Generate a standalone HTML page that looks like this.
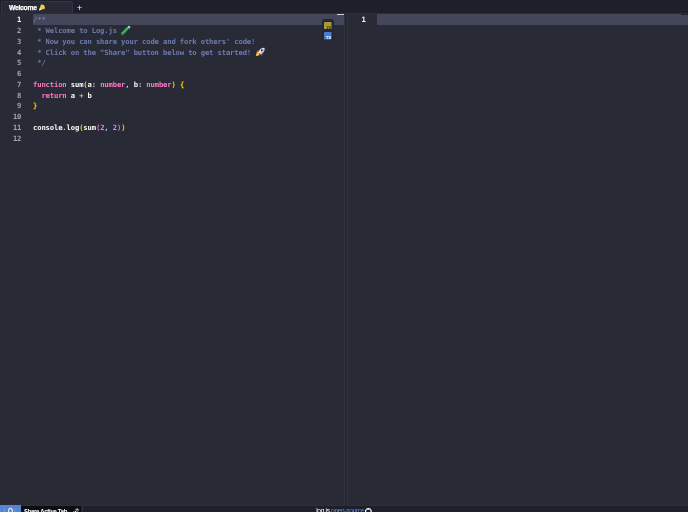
<!DOCTYPE html>
<html lang="en">
<head>
<meta charset="utf-8">
<title>Log.js</title>
<style>
*{box-sizing:border-box;margin:0;padding:0}
html,body{width:688px;height:512px;overflow:hidden;background:#282a36}
body{position:relative;font-family:"Liberation Sans",sans-serif;color:#f8f8f2}
.abs{position:absolute}
#root{left:0;top:0;width:688px;height:512px;overflow:hidden;will-change:transform}
#tabbar{left:0;top:0;width:688px;height:13.8px;background:#1d1f2a}
#tabline{left:0;top:12.6px;width:688px;height:1.2px;background:#2b2d3a}
#tab{left:1px;top:1.1px;width:72px;height:11.6px;background:#272935;border:0.6px solid #333547;border-bottom:none;border-radius:2.5px 2.5px 0 0}
#tabtxt{left:8.9px;top:3.1px;-webkit-text-stroke:0.25px #fff;font-size:6.8px;line-height:10px;font-weight:bold;letter-spacing:-0.28px;color:#fff;white-space:nowrap}
#plus{left:74.6px;top:1.7px;width:10px;height:12px;font-size:9.5px;line-height:12px;text-align:center;color:#f4f4f8}
#hl1{left:33px;top:13.8px;width:311px;height:11.1px;background:#44475a}
#hl2{left:377.2px;top:13.8px;width:311px;height:11.3px;background:#44475a}
.mono{font-family:"DejaVu Sans Mono","Liberation Mono",monospace;font-size:7.2px;letter-spacing:-0.134px;font-weight:bold;white-space:pre}
.ln{left:0;width:21.3px;text-align:right;color:#9fa1ad;height:10.75px;line-height:10.75px}
.ln.act{color:#f8f8f2}
.cl{left:33px;height:10.75px;line-height:10.75px;color:#f8f8f2}
.c{color:#6c7cb0}.k{color:#ff79c6}.y{color:#ffd700}.o{color:#da70d6}.n{color:#bd93f9}.p{color:#c9cad6}
#div1{left:343.6px;top:13.8px;width:1.4px;height:491.1px;background:#2f3140}
#div2{left:345px;top:13.8px;width:2.4px;height:491.1px;background:#262833}
#icons{left:322px;top:18.7px;width:11.6px;height:22.8px;background:#262733;border-radius:2.5px}
#footer{left:0;top:504.9px;width:688px;height:8px;background:#1d1f2a;border-top:0.9px solid #2d2f3c}
#fblue{left:0;top:505.3px;width:20.7px;height:7px;background:#5684d7}
#fblack{left:20.7px;top:505.8px;width:60.5px;height:7px;background:#0d0e13}
.ft{font-size:6.6px;line-height:8px;white-space:nowrap;color:#fff}
</style>
</head>
<body>
<div id="root" class="abs">
<div id="tabbar" class="abs"></div>
<div id="tabline" class="abs"></div>
<div id="tab" class="abs"></div>
<div id="tabtxt" class="abs">Welcome</div>
<svg class="abs" role="img" aria-label="party popper" style="left:38.2px;top:3.2px" width="7.2" height="8.4" viewBox="38 3 8 9">
  <path d="M39.1 11.1 L41.1 5 C43.4 4.6 45.2 6.6 45.3 9.2 Z" fill="#e9bf55"/>
  <path d="M39.1 11.1 L40.2 7.8 L42.6 10.2 Z" fill="#efe2c4"/>
  <path d="M41.1 5 C42.6 3.9 44.6 4.6 45.3 6.6 C45.8 8 45.7 9 45.3 9.3 C43.4 8.8 41.6 7 41.1 5 Z" fill="#f2d638"/>
  <circle cx="41.9" cy="4" r="0.5" fill="#8a6a2a"/><circle cx="45.3" cy="10.4" r="0.45" fill="#a8782a"/>
</svg>
<div id="plus" class="abs">+</div>

<div id="hl1" class="abs"></div>
<div id="hl2" class="abs"></div>
<div id="div1" class="abs"></div>
<div id="div2" class="abs"></div>
<div class="abs" style="left:347.4px;top:13.8px;width:0.7px;height:491.1px;background:#2e303d"></div>

<div class="abs mono ln act" style="top:15.40px">1</div>
<div class="abs mono ln" style="top:26.15px">2</div>
<div class="abs mono ln" style="top:36.90px">3</div>
<div class="abs mono ln" style="top:47.65px">4</div>
<div class="abs mono ln" style="top:58.40px">5</div>
<div class="abs mono ln" style="top:69.15px">6</div>
<div class="abs mono ln" style="top:79.90px">7</div>
<div class="abs mono ln" style="top:90.65px">8</div>
<div class="abs mono ln" style="top:101.40px">9</div>
<div class="abs mono ln" style="top:112.15px">10</div>
<div class="abs mono ln" style="top:122.90px">11</div>
<div class="abs mono ln" style="top:133.65px">12</div>
<div class="abs mono cl" style="top:15.40px"><span class="c">/**</span></div>
<div class="abs mono cl" style="top:26.15px"><span class="c"> * Welcome to Log.js </span></div>
<div class="abs mono cl" style="top:36.90px"><span class="c"> * Now you can share your code and fork others' code!</span></div>
<div class="abs mono cl" style="top:47.65px"><span class="c"> * Click on the "Share" button below to get started! </span></div>
<div class="abs mono cl" style="top:58.40px"><span class="c"> */</span></div>
<div class="abs mono cl" style="top:79.90px"><span class="k">function</span> sum<span class="y">(</span>a<span class="p">:</span> <span class="k">number</span><span class="p">,</span> b<span class="p">:</span> <span class="k">number</span><span class="y">)</span> <span class="y">{</span></div>
<div class="abs mono cl" style="top:90.65px">  <span class="k">return</span> a <span class="k">+</span> b</div>
<div class="abs mono cl" style="top:101.40px"><span class="y">}</span></div>
<div class="abs mono cl" style="top:122.90px">console<span class="p">.</span>log<span class="y">(</span>sum<span class="o">(</span><span class="n">2</span><span class="p">,</span> <span class="n">2</span><span class="o">)</span><span class="y">)</span></div>

<div id="icons" class="abs"></div>
<!-- crayon emoji on line 2 -->
<svg class="abs" role="img" aria-label="crayon" style="left:119px;top:24px" width="13" height="13" viewBox="0 0 13 13">
  <g transform="rotate(-45 6.6 6.5)">
    <rect x="0.9" y="5.3" width="11.6" height="2.5" rx="0.8" fill="#33a350"/>
    <rect x="0.9" y="5.3" width="9.4" height="0.9" rx="0.4" fill="#5cc474"/>
    <rect x="10.6" y="5.3" width="1.9" height="2.5" rx="0.7" fill="#c6cad2"/>
    <rect x="0.9" y="5.5" width="1.3" height="2.1" rx="0.5" fill="#237d3c"/>
  </g>
</svg>
<!-- rocket emoji on line 4 -->
<svg class="abs" role="img" aria-label="rocket" style="left:254.6px;top:47.1px" width="10" height="10" viewBox="0 0 11 11">
  <path d="M1.2 10 C1 7.6 1.8 5.6 3.6 4.6 L5.2 7.6 C4.4 9.2 2.8 10 1.2 10 Z" fill="#f4c531"/>
  <path d="M1.6 5.4 C2.2 4 3.2 3.6 4.4 3.8 L4.6 5.6 C3.4 5.4 2.4 5.6 1.6 6.6 Z" fill="#c2521f"/>
  <path d="M4.6 7 L7.4 9.6 C8.2 8.6 8.4 7.4 8 6.2 Z" fill="#c8452f"/>
  <path d="M10.4 0.8 C8 0.6 5.6 1.8 4.2 4.4 L3.8 6 L6 8 L7.4 7.4 C9.8 5.8 10.8 3.2 10.4 0.8 Z" fill="#dcdcec"/>
  <path d="M10.4 0.8 C10.8 3.2 9.8 5.8 7.4 7.4 L6 8 L5.2 7.2 C8 5.6 9.6 3.4 10.4 0.8 Z" fill="#b4b2cc"/>
  <circle cx="7.5" cy="3.5" r="1.05" fill="#2a1e30"/>
</svg>
<!-- language icons -->
<svg class="abs" style="left:324.3px;top:21.8px" width="7.5" height="7.3" viewBox="0 0 7.5 7.3">
  <rect width="7.5" height="7.3" rx="0.5" fill="#a9993b"/>
  <text x="7" y="6.7" text-anchor="end" font-family="Liberation Sans, sans-serif" font-weight="bold" font-size="3.9" fill="#2e2a1c">JS</text>
</svg>
<svg class="abs" style="left:324.3px;top:32.4px" width="7.5" height="7.4" viewBox="0 0 7.5 7.4">
  <rect width="7.5" height="7.4" rx="0.8" fill="#4a7ed2"/>
  <text x="7" y="6.7" text-anchor="end" font-family="Liberation Sans, sans-serif" font-weight="bold" font-size="3.9" fill="#ffffff">TS</text>
</svg>
<div class="abs" style="left:337.4px;top:14.1px;width:6.4px;height:1.3px;background:#cdced6"></div>
<!-- console panel -->
<div class="abs mono" style="left:347px;width:18.6px;text-align:right;top:15.40px;height:10.75px;line-height:10.75px;color:#f8f8f2">1</div>

<div id="footer" class="abs"></div>
<div id="fblue" class="abs"></div>
<div id="fblack" class="abs"></div>
<div class="abs" style="left:81.9px;top:506px;width:0.8px;height:6px;background:#323442"></div>
<div class="abs" style="left:681px;top:13.6px;width:7px;height:1.7px;background:#20212c"></div>
<svg class="abs" style="left:0;top:505px" width="21" height="7" viewBox="0 505 21 7" fill="none" stroke-linecap="round">
  <path d="M8.6 513 V510.6 a1.85 2.3 0 0 1 3.7 0 V513" stroke="#dfe8fa" stroke-width="1.15"/>
  <path d="M4.5 508.8 V513" stroke="#7a9de0" stroke-width="0.8"/>
  <path d="M15.8 509.2 L14.4 512.4" stroke="#7a9de0" stroke-width="0.8"/>
</svg>
<div class="abs ft" id="share" style="left:24.1px;top:507.9px;font-weight:bold;letter-spacing:-0.3px;transform:translateY(-0.5px) scaleX(0.9);transform-origin:0 0">Share Active Tab</div>
<svg class="abs" style="left:71.8px;top:507.9px" width="7" height="7" viewBox="0 0 12 12" fill="none" stroke="#f4f4f8" stroke-width="1.7" stroke-linecap="round">
  <path d="M5 7 L7 5"/>
  <path d="M6.2 3.2 L7.4 2 a1.9 1.9 0 0 1 2.7 2.7 L8.9 5.9"/>
  <path d="M5.8 8.8 L4.6 10 a1.9 1.9 0 0 1 -2.7 -2.7 L3.1 6.1"/>
</svg>
<div class="abs ft" id="oss" style="left:316.2px;top:507.9px;letter-spacing:-0.33px;transform:translateY(-0.6px)">log is <span style="color:#5b8ee6">open-source</span></div>
<svg class="abs" style="left:365.3px;top:508.2px" width="6.8" height="6.8" viewBox="0 0 16 16">
  <path fill="#ffffff" d="M8 0C3.58 0 0 3.58 0 8c0 3.54 2.29 6.53 5.47 7.59.4.07.55-.17.55-.38 0-.19-.01-.82-.01-1.49-2.01.37-2.53-.49-2.69-.94-.09-.23-.48-.94-.82-1.13-.28-.15-.68-.52-.01-.53.63-.01 1.08.58 1.23.82.72 1.21 1.87.87 2.33.66.07-.52.28-.87.51-1.07-1.78-.2-3.64-.89-3.64-3.95 0-.87.31-1.59.82-2.15-.08-.2-.36-1.02.08-2.12 0 0 .67-.21 2.2.82.64-.18 1.32-.27 2-.27s1.36.09 2 .27c1.53-1.04 2.2-.82 2.2-.82.44 1.1.16 1.92.08 2.12.51.56.82 1.27.82 2.15 0 3.07-1.87 3.75-3.65 3.95.29.25.54.73.54 1.48 0 1.07-.01 1.93-.01 2.2 0 .21.15.46.55.38A8.01 8.01 0 0 0 16 8c0-4.42-3.58-8-8-8z"/>
</svg>

</div>
</body>
</html>
